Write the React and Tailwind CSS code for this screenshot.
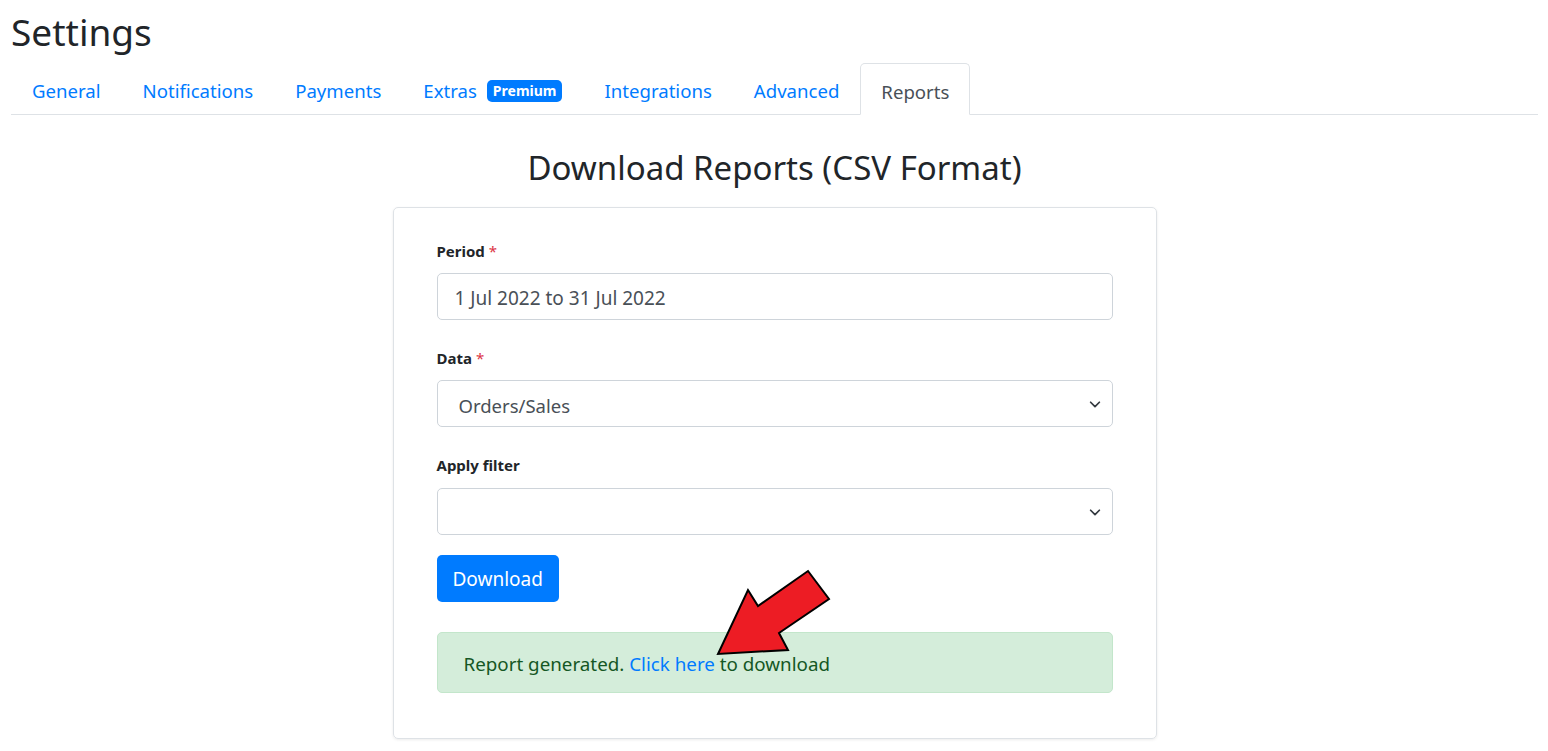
import React from "react";

const Chevron = () => (
  <svg width="14" height="14" viewBox="0 0 16 16" className="absolute right-[10px] top-1/2 -translate-y-1/2">
    <path d="M3 6l5 5 5-5" fill="none" stroke="#343a40" strokeWidth="2" strokeLinecap="round" strokeLinejoin="round" />
  </svg>
);

export default function App() {
  const tabs = ["General", "Notifications", "Payments", "Extras", "Integrations", "Advanced"];
  return (
    <div className="min-h-screen bg-white pl-[11px] pr-[10px] text-[#212529]" style={{ fontFamily: '"Noto Sans", "Open Sans", sans-serif' }}>
      <h2 className="text-[37px] leading-[48px] pt-[8px] mb-[7px] font-normal">Settings</h2>
      <div className="flex border-b border-[#dee2e6] text-[18.6px]">
        {tabs.map((t) => (
          <div key={t} className="flex items-center h-[51px] pt-[5px] px-[20px] text-[#007bff] -mb-px border border-transparent">
            <span>{t}</span>
            {t === "Extras" && (
              <span className="ml-[10px] bg-[#007bff] text-white text-[14px] font-bold rounded-[5px] px-[6px] leading-[22px]">Premium</span>
            )}
          </div>
        ))}
        <div className="flex items-center h-[52px] pt-[5px] px-[20px] text-[#495057] -mb-px border border-[#dee2e6] border-b-white rounded-t-[5px] bg-white">
          Reports
        </div>
      </div>
      <h3 className="text-center text-[33px] leading-[42px] mt-[32px] mb-[18px] font-normal">Download Reports (CSV Format)</h3>
      <div className="relative mx-auto w-[764px] border border-[#dee2e6] rounded-[5px] shadow-[0_1px_3px_rgba(0,0,0,0.08)] px-[43px] pt-[33px] pb-[45px]">
        <div className="text-[15px] font-bold leading-[20px] mb-[12px]">
          Period <span className="text-[#dc3545] font-normal">*</span>
        </div>
        <div className="h-[47px] border border-[#ced4da] rounded-[5px] flex items-center pt-[3px] px-[17px] text-[19px] text-[#495057]">
          1 Jul 2022 to 31 Jul 2022
        </div>
        <div className="text-[15px] font-bold leading-[20px] mt-[28px] mb-[12px]">
          Data <span className="text-[#dc3545] font-normal">*</span>
        </div>
        <div className="relative h-[47px] border border-[#ced4da] rounded-[5px] flex items-center pt-[4px] px-[21px] text-[18.5px] text-[#495057]">
          Orders/Sales
          <Chevron />
        </div>
        <div className="text-[15px] font-bold leading-[20px] mt-[28px] mb-[13px]">Apply filter</div>
        <div className="relative h-[47px] border border-[#ced4da] rounded-[5px]">
          <Chevron />
        </div>
        <button className="mt-[20px] h-[47px] px-[16px] bg-[#007bff] text-white text-[19px] rounded-[5px] pt-[2px]">Download</button>
        <div className="mt-[30px] h-[61px] flex items-center pt-[3px] px-[26px] bg-[#d4edda] border border-[#c3e6cb] rounded-[5px] text-[#155724] text-[18.8px]">
          <span>
            Report generated. <span className="text-[#007bff]">Click here</span> to download
          </span>
        </div>
        <svg className="absolute left-[310px] top-[355px]" width="135" height="100" viewBox="0 0 135 100">
          <polygon points="14,91 44,27 54,43 104,8 125,36 75,70 84,87" fill="#ed1c24" stroke="#000" strokeWidth="2" strokeLinejoin="miter" />
        </svg>
      </div>
    </div>
  );
}
